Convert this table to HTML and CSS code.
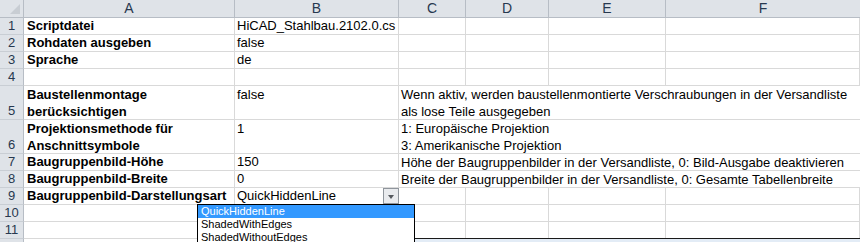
FILE: index.html
```html
<!DOCTYPE html>
<html lang="de">
<head>
    <title>Versandliste Einstellungen</title>
    <link rel="stylesheet" href="styles.css">
</head>
<body>
    <div class="sheet">
        <div class="corner"></div>
        <div class="colhead">A</div>
        <div class="colhead">B</div>
        <div class="colhead">C</div>
        <div class="colhead">D</div>
        <div class="colhead">E</div>
        <div class="colhead last">F</div>

        <div class="rowhead">1</div>
        <div class="cell key">Scriptdatei</div>
        <div class="cell">HiCAD_Stahlbau.2102.0.cs</div>
        <div class="cell"></div>
        <div class="cell"></div>
        <div class="cell"></div>
        <div class="cell"></div>

        <div class="rowhead">2</div>
        <div class="cell key">Rohdaten ausgeben</div>
        <div class="cell">false</div>
        <div class="cell"></div>
        <div class="cell"></div>
        <div class="cell"></div>
        <div class="cell"></div>

        <div class="rowhead">3</div>
        <div class="cell key">Sprache</div>
        <div class="cell">de</div>
        <div class="cell"></div>
        <div class="cell"></div>
        <div class="cell"></div>
        <div class="cell"></div>

        <div class="rowhead">4</div>
        <div class="cell key"></div>
        <div class="cell"></div>
        <div class="cell"></div>
        <div class="cell"></div>
        <div class="cell"></div>
        <div class="cell"></div>

        <div class="rowhead tall">5</div>
        <div class="cell key">Baustellenmontage<br>berücksichtigen</div>
        <div class="cell top">false</div>
        <div class="cell wide">Wenn aktiv, werden baustellenmontierte Verschraubungen in der Versandliste<br>als lose Teile ausgegeben</div>

        <div class="rowhead tall">6</div>
        <div class="cell key">Projektionsmethode für<br>Anschnittsymbole</div>
        <div class="cell top">1</div>
        <div class="cell wide">1: Europäische Projektion<br>3: Amerikanische Projektion</div>

        <div class="rowhead">7</div>
        <div class="cell key">Baugruppenbild-Höhe</div>
        <div class="cell">150</div>
        <div class="cell wide">Höhe der Baugruppenbilder in der Versandliste, 0: Bild-Ausgabe deaktivieren</div>

        <div class="rowhead">8</div>
        <div class="cell key">Baugruppenbild-Breite</div>
        <div class="cell">0</div>
        <div class="cell wide">Breite der Baugruppenbilder in der Versandliste, 0: Gesamte Tabellenbreite</div>

        <div class="rowhead">9</div>
        <div class="cell key">Baugruppenbild-Darstellungsart</div>
        <div class="cell select">
            <span>QuickHiddenLine</span>
            <span class="arrow"></span>
        </div>
        <div class="cell"></div>
        <div class="cell"></div>
        <div class="cell"></div>
        <div class="cell"></div>

        <div class="rowhead">10</div>
        <div class="cell key"></div>
        <div class="cell"></div>
        <div class="cell"></div>
        <div class="cell"></div>
        <div class="cell"></div>
        <div class="cell"></div>

        <div class="rowhead">11</div>
        <div class="cell key"></div>
        <div class="cell"></div>
        <div class="cell"></div>
        <div class="cell"></div>
        <div class="cell"></div>
        <div class="cell"></div>

        <div class="rowhead"></div>
        <div class="cell key"></div>
        <div class="cell"></div>
        <div class="cell"></div>
        <div class="cell"></div>
        <div class="cell"></div>
        <div class="cell"></div>
    </div>

    <!-- window edge behind the open list -->
    <div class="backdrop"></div>

    <ul class="dropdown">
        <li class="active">QuickHiddenLine</li>
        <li>ShadedWithEdges</li>
        <li>ShadedWithoutEdges</li>
    </ul>
</body>
</html>
```

FILE: styles.css
```css
body {
    margin: 0;
    width: 860px;
    height: 242px;
    overflow: hidden;
    background: #fff;
    position: relative;
    font-family: "Liberation Sans", Arial, sans-serif;
    font-size: 13px;
    color: #000;
}
.sheet {
    display: grid;
    grid-template-columns: 24px 211px 164px 67px 83px 117px 1fr;
    grid-template-rows: 18px 17px 17px 17px 17px 34px 34px 17px 17px 17px 17px 17px 4px;
    height: 242px;
    overflow: hidden;
}
.corner,
.colhead,
.rowhead {
    background: #dfe3e8;
    box-sizing: border-box;
    color: #27384f;
}
.corner {
    border-right: 1px solid #b7bdc5;
    border-bottom: 1px solid #b7bdc5;
    position: relative;
}
.corner::after {
    content: "";
    position: absolute;
    right: 3px;
    bottom: 3px;
    border-style: solid;
    border-width: 0 0 10px 10px;
    border-color: transparent transparent #c8cdd3 transparent;
}
.colhead {
    border-right: 1px solid #b7bdc5;
    border-bottom: 1px solid #b7bdc5;
    text-align: center;
    font-size: 14px;
    line-height: 17px;
}
.colhead.last {
    border-right: none;
}
.rowhead {
    border-right: 1px solid #b7bdc5;
    border-bottom: 1px solid #c9ced4;
    text-align: center;
    line-height: 16px;
    font-size: 13px;
}
.rowhead.tall {
    display: flex;
    align-items: flex-end;
    justify-content: center;
}
.cell {
    box-sizing: border-box;
    border-right: 1px solid #d9d9d9;
    border-bottom: 1px solid #d9d9d9;
    padding-left: 2px;
    line-height: 16px;
    white-space: nowrap;
    overflow: hidden;
}
.key {
    font-weight: bold;
    padding-left: 3px;
}
.rowhead.tall + .key {
    line-height: 17px;
}
.top {
    line-height: 17px;
}
.wide {
    grid-column: 4 / 8;
    line-height: 17px;
    border-right: none;
}
.select {
    display: flex;
    justify-content: space-between;
    padding-right: 0;
    overflow: visible;
}
.arrow {
    width: 16px;
    height: 16px;
    box-sizing: border-box;
    border: 1px solid #8f959c;
    background: #e9ebee;
    position: relative;
    margin-right: -1px;
}
.arrow::after {
    content: "";
    position: absolute;
    left: 4px;
    top: 6px;
    border-style: solid;
    border-width: 4px 3.5px 0 3.5px;
    border-color: #55595e transparent transparent transparent;
}
.backdrop {
    position: absolute;
    left: 415px;
    top: 238px;
    right: 0;
    bottom: 0;
    border-top: 1px solid #1a1a1a;
    background: #e3ecf6;
}
.dropdown {
    position: absolute;
    left: 197px;
    top: 204px;
    width: 218px;
    height: 38px;
    overflow: hidden;
    box-sizing: border-box;
    margin: 0;
    padding: 0;
    list-style: none;
    background: #fff;
    border: 1px solid #000;
    border-bottom: none;
    font-size: 11px;
}
.dropdown li {
    height: 13px;
    line-height: 13px;
    padding-left: 3px;
}
.dropdown li.active {
    background: #3399ff;
    color: #fff;
}
```
